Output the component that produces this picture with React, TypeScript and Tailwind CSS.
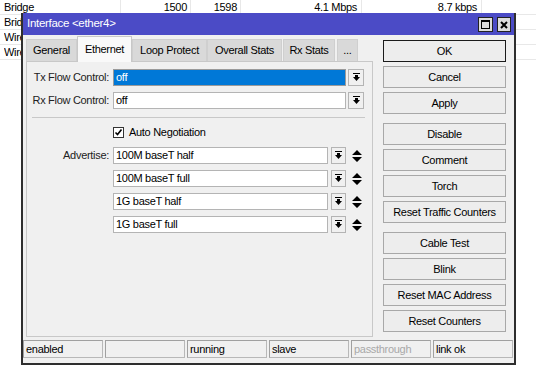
import React from 'react';

const font = "font-['Liberation_Sans',Arial,sans-serif] text-[11px] tracking-[-0.3px] text-black";

const rows = [
  ['Bridge', '1500', '1598', '4.1 Mbps', '8.7 kbps'],
  ['Bridge', '', '', '', ''],
  ['Wireless', '', '', '', ''],
  ['Wireless', '', '', '', ''],
];

const DropIcon = () => (
  <svg width="7" height="9" viewBox="0 0 7 9">
    <path d="M0 0h7v1H0z M2 2h3v2h2L3.5 8 0 4h2z" fill="#000" />
  </svg>
);

const UpDown = () => (
  <svg width="10" height="12" viewBox="0 0 10 12">
    <path d="M5 0l5 5H0z M0 7h10l-5 5z" fill="#000" />
  </svg>
);

const DropButton = ({ w }: { w: string }) => (
  <div className={`${w} h-[17px] border border-[#b4b4b4] bg-[#f0f0f0] flex items-center justify-center`}>
    <DropIcon />
  </div>
);

const Tab = ({ label, w, active }: { label: string; w: string; active?: boolean }) => (
  <div
    className={`${w} flex items-center justify-center border-t border-x ${
      active
        ? 'h-[26px] -mb-px z-10 bg-[#f9f9f9] border-[#c8c8c8]'
        : 'h-[22px] bg-[#d9d9d9] border-[#cfcfcf]'
    }`}
  >
    {label}
  </div>
);

const Button = ({ label, ok }: { label: string; ok?: boolean }) => (
  <div
    className={`w-[123px] h-[22px] mb-[4px] flex items-center justify-center bg-[#ededed] border ${
      ok ? 'border-[#1a1a1a]' : 'border-[#a8a8a8]'
    }`}
  >
    {label}
  </div>
);

const Advertise = ({ label, value }: { label?: string; value: string }) => (
  <div className="flex items-center mt-[6px]">
    <div className="w-[86px] pr-[4px] text-right text-[#222]">{label ?? ''}</div>
    <div className="w-[215px] h-[17px] border border-[#b4b4b4] bg-white pl-[2px] leading-[15px]">{value}</div>
    <div className="ml-[3px]">
      <DropButton w="w-[15px]" />
    </div>
    <div className="ml-[6px] mt-[1px]">
      <UpDown />
    </div>
  </div>
);

const App = () => {
  return (
    <div className={`relative w-[536px] h-[381px] bg-white overflow-hidden ${font}`}>
      {/* list behind the window */}
      <div className="flex flex-col">
        {rows.map((r, i) => (
          <div key={i} className="flex h-[15px] leading-[14px] border-b border-[#e8e8e8]">
            <div className="w-[121px] pl-[4px] border-r border-[#e8e8e8]">
              {/* only the part not covered by the window */}
              <div className={i === 0 ? '' : 'w-[17px] overflow-hidden whitespace-nowrap'}>{r[0]}</div>
            </div>
            <div className="w-[70px] pr-[3px] text-right border-r border-[#e8e8e8]">{r[1]}</div>
            <div className="w-[50px] pr-[3px] text-right border-r border-[#e8e8e8]">{r[2]}</div>
            <div className="w-[121px] pr-[4px] text-right border-r border-[#e8e8e8]">{r[3]}</div>
            <div className="w-[120px] pr-[4px] text-right border-r border-[#e8e8e8]">{r[4]}</div>
            <div className="flex-1" />
          </div>
        ))}
      </div>

      {/* window */}
      <div className="absolute left-[21px] top-[13px] w-[495px] h-[352px] bg-[#f0f0f0] border-x-2 border-b-2 border-[#2e2e2e] flex flex-col">
        <div className="h-[22px] bg-[#4b4bc6] flex items-center pl-[4px] pr-[3px] text-white text-[11.5px]">
          <span className="-mt-px">Interface &lt;ether4&gt;</span>
          <div className="ml-auto flex items-center gap-[4px] mt-[1px]">
            <div className="w-[15px] h-[15px] bg-[#dcdcdc] border border-[#222] flex items-center justify-center">
              <svg width="9" height="9" viewBox="0 0 9 9">
                <rect x="0.5" y="0.5" width="8" height="8" fill="none" stroke="#000" />
                <rect x="0" y="0" width="9" height="2" fill="#000" />
              </svg>
            </div>
            <div className="w-[14px] h-[15px] bg-[#dcdcdc] border border-[#222] flex items-center justify-center">
              <svg width="8" height="8" viewBox="0 0 8 8">
                <path d="M1 1l6 6M7 1L1 7" stroke="#000" strokeWidth="2" />
              </svg>
            </div>
          </div>
        </div>

        <div className="flex h-[302px]">
          {/* tabs + panel */}
          <div className="ml-[3px] pt-[1px] flex flex-col">
            <div className="flex items-end h-[25px]">
              <Tab label="General" w="w-[51px]" />
              <Tab label="Ethernet" w="w-[55px]" active />
              <Tab label="Loop Protect" w="w-[75px]" />
              <Tab label="Overall Stats" w="w-[75px]" />
              <div className="w-px" />
              <Tab label="Rx Stats" w="w-[52px]" />
              <div className="w-[2px]" />
              <Tab label="..." w="w-[21px]" />
            </div>
            <div className="w-[347px] h-[276px] border border-[#c8c8c8] bg-[#f0f0f0] flex flex-col">
              <div className="flex items-center mt-[7px]">
                <div className="w-[86px] pr-[4px] text-right text-[#222]">Tx Flow Control:</div>
                <div className="w-[233px] h-[17px] border border-[#9a9a9a] bg-[#0078d7] text-white pl-[2px] leading-[15px]">
                  off
                </div>
                <div className="ml-[2px]">
                  <DropButton w="w-[16px]" />
                </div>
              </div>
              <div className="flex items-center mt-[6px]">
                <div className="w-[86px] pr-[4px] text-right text-[#222]">Rx Flow Control:</div>
                <div className="w-[233px] h-[17px] border border-[#b4b4b4] bg-white pl-[2px] leading-[15px]">off</div>
                <div className="ml-[2px]">
                  <DropButton w="w-[16px]" />
                </div>
              </div>
              <div className="mt-[8px] ml-[5px] w-[333px] h-px bg-[#c8c8c8]" />
              <div className="flex items-center mt-[8px] ml-[86px] h-[12px]">
                <div className="w-[11px] h-[11px] border border-[#333] bg-white flex items-center justify-center">
                  <svg width="9" height="9" viewBox="0 0 9 9">
                    <path d="M1.5 4.5l2 2 4-5" fill="none" stroke="#000" strokeWidth="1.6" />
                  </svg>
                </div>
                <span className="ml-[5px]">Auto Negotiation</span>
              </div>
              <div className="mt-[3px]">
                <Advertise label="Advertise:" value="100M baseT half" />
                <Advertise value="100M baseT full" />
                <Advertise value="1G baseT half" />
                <Advertise value="1G baseT full" />
              </div>
            </div>
          </div>

          {/* buttons */}
          <div className="ml-[10px] pt-[5px] flex flex-col">
            <Button label="OK" ok />
            <Button label="Cancel" />
            <Button label="Apply" />
            <div className="mt-[5px]" />
            <Button label="Disable" />
            <Button label="Comment" />
            <Button label="Torch" />
            <Button label="Reset Traffic Counters" />
            <div className="mt-[5px]" />
            <Button label="Cable Test" />
            <Button label="Blink" />
            <Button label="Reset MAC Address" />
            <Button label="Reset Counters" />
          </div>
        </div>

        {/* status bar */}
        <div className="mt-[3px] flex gap-[2px] h-[18px]">
          {['enabled', '', 'running', 'slave', 'passthrough', 'link ok'].map((s, i) => (
            <div
              key={i}
              className={`w-[80px] h-[18px] pl-[2px] leading-[16px] border border-[#b8b8b8] border-t-[#a0a0a0] border-l-[#a0a0a0] ${
                s === 'passthrough' ? 'text-[#a8a8a8]' : ''
              }`}
            >
              {s}
            </div>
          ))}
        </div>
      </div>
    </div>
  );
};

export default App;
